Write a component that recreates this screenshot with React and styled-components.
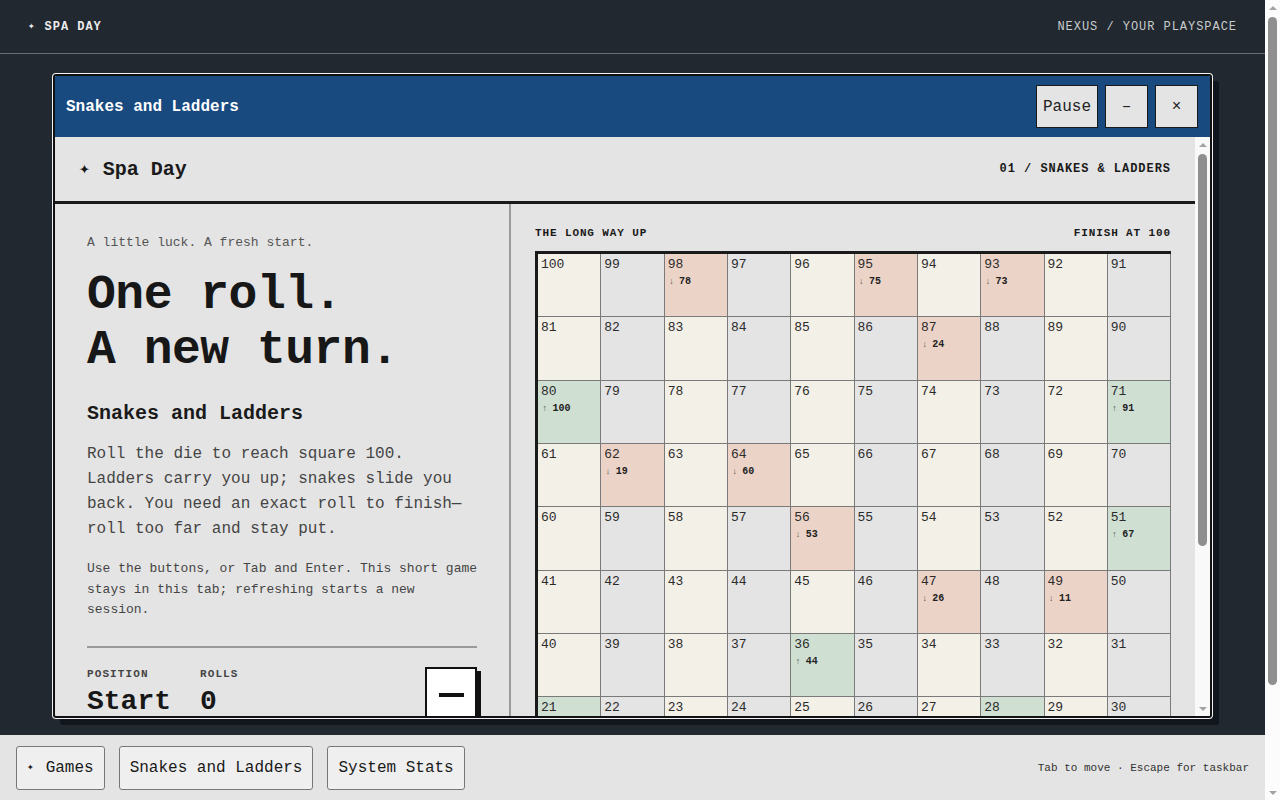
import React from 'react'
import styled, { createGlobalStyle } from 'styled-components'

const MONO = '"Liberation Mono", "DejaVu Sans Mono", monospace'

const GlobalStyle = createGlobalStyle`
    * { box-sizing: border-box; }
    body {
        margin: 0;
        background: #212830;
        font-family: ${MONO};
        color: #1a1a1a;
    }
`

const Page = styled.div`
    min-height: 918px;
    padding-right: 15px;
`
const TopBar = styled.header`
    height: 54px;
    display: flex;
    align-items: center;
    justify-content: space-between;
    padding: 0 28px;
    border-bottom: 1px solid #6a6e74;
    font-size: 12px;
    font-weight: 700;
    letter-spacing: 0.08em;
`
const Brand = styled.div`
    color: #ececec;
    display: flex;
    align-items: center;
    gap: 9px;
`
const Crumb = styled.div`
    color: #c9cbcd;
    font-weight: 400;
`
const Desktop = styled.main`
    padding: 20px 53px 0 53px;
`
const Window = styled.section`
    height: 644px;
    display: flex;
    flex-direction: column;
    border: 2px solid #111;
    border-radius: 3px;
    background: #e4e4e4;
    box-shadow: 0 0 0 1px #f2f2f2, 7px 7px 0 0 #11161c;
    overflow: hidden;
`
const TitleBar = styled.div`
    height: 61px;
    flex-shrink: 0;
    display: flex;
    align-items: center;
    justify-content: space-between;
    background: #184a7f;
    padding: 0 12px 0 11px;
`
const WindowTitle = styled.h2`
    margin: 0;
    color: #fff;
    font-size: 16px;
    font-weight: 700;
`
const TitleButtons = styled.div`
    display: flex;
    gap: 7px;
`
const TitleButton = styled.button`
    height: 43px;
    min-width: ${p => p.$wide ? '62px' : '43px'};
    padding: 0 6px;
    background: #e4e4e4;
    border: 1px solid #1a1a1a;
    font-family: ${MONO};
    font-size: 16px;
    color: #222;
    cursor: pointer;
`
const WindowBody = styled.div`
    flex: 1;
    min-height: 0;
    display: flex;
`
const BodyContent = styled.div`
    flex: 1;
    min-width: 0;
    overflow: hidden;
`

/* scroll rails drawn to match the browser's classic scrollbars */
const Rail = styled.div`
    width: 15px;
    flex-shrink: 0;
    background: #f9f9f9;
    display: flex;
    flex-direction: column;
    align-items: center;
`
const PageRail = styled(Rail)`
    position: fixed;
    top: 0;
    right: 0;
    bottom: 0;
    background: #fcfcfc;
`
const RailArrow = styled.span`
    height: 15px;
    flex-shrink: 0;
    display: flex;
    align-items: center;
    justify-content: center;
    &::before {
        content: '';
        border-left: 4px solid transparent;
        border-right: 4px solid transparent;
        ${p => p.$down ? 'border-top: 4px solid #a3a3a3;' : 'border-bottom: 4px solid #a3a3a3;'}
    }
`
const RailThumb = styled.span`
    width: 9px;
    height: ${p => p.$size}px;
    margin-top: 2px;
    border-radius: 5px;
    background: #8f8f8f;
`
const RailSpacer = styled.span`
    flex: 1;
`

const GameHeader = styled.div`
    height: 67px;
    display: flex;
    align-items: center;
    justify-content: space-between;
    padding: 0 24px;
    border-bottom: 3px solid #1a1a1a;
`
const GameName = styled.h1`
    margin: 0;
    font-size: 20px;
    font-weight: 700;
    display: flex;
    align-items: center;
    gap: 13px;
`
const Spark = styled.span`
    font-size: ${p => p.$size || '12px'};
    line-height: 1;
`
const GameIndex = styled.div`
    font-size: 12px;
    font-weight: 700;
    letter-spacing: 0.08em;
`
const GameLayout = styled.div`
    display: grid;
    grid-template-columns: 456px 1fr;
`
const InfoPanel = styled.div`
    padding: 31px 32px 24px 32px;
    border-right: 2px solid #9a9a9a;
`
const Tagline = styled.p`
    margin: 0 0 18px;
    font-size: 13px;
    color: #555;
`
const Headline = styled.h1`
    margin: 0 0 24px;
    font-size: 48px;
    line-height: 55px;
    letter-spacing: -0.01em;
    font-weight: 700;
    color: #171717;
`
const Subhead = styled.h3`
    margin: 0 0 17px;
    font-size: 20px;
    font-weight: 700;
`
const Lead = styled.p`
    margin: 0 0 17px;
    font-size: 16px;
    line-height: 25px;
    color: #444;
`
const Note = styled.p`
    margin: 0 -1px 0 0;
    font-size: 13px;
    line-height: 20.5px;
    color: #444;
`
const Divider = styled.hr`
    margin: 25px 0 20px;
    border: 0;
    border-top: 2px solid #9a9a9a;
`
const StatsRow = styled.div`
    display: flex;
    align-items: flex-start;
    gap: 29px;
`
const Stat = styled.div`
    display: flex;
    flex-direction: column;
    gap: 6px;
`
const StatLabel = styled.span`
    font-size: 11px;
    font-weight: 700;
    letter-spacing: 0.1em;
    color: #444;
`
const StatValue = styled.span`
    font-size: 28px;
    font-weight: 700;
    color: #171717;
`
const DieButton = styled.button`
    margin-left: auto;
    margin-top: -1px;
    width: 52px;
    height: 64px;
    background: #fff;
    border: 2px solid #111;
    box-shadow: 4px 4px 0 #111;
    display: flex;
    align-items: flex-start;
    justify-content: center;
    padding-top: 24px;
    cursor: pointer;
`
const DieFace = styled.span`
    display: block;
    width: 25px;
    height: 4px;
    background: #111;
`
const BoardPanel = styled.div`
    padding: 23px 24px 24px;
`
const BoardHead = styled.div`
    display: flex;
    justify-content: space-between;
    align-items: center;
    margin-bottom: 12px;
`
const BoardLabel = styled.span`
    font-size: 11px;
    font-weight: 700;
    letter-spacing: 0.08em;
`
const Board = styled.div`
    display: grid;
    grid-template-columns: repeat(10, 1fr);
    border-top: 3px solid #1a1a1a;
    border-left: 3px solid #1a1a1a;
`
const CELL_BG = {
  cream: '#f3f0e8',
  grey: '#e4e4e4',
  snake: '#ecd3c7',
  ladder: '#cfdfd2',
}
const Cell = styled.div`
    aspect-ratio: 1;
    padding: 3px 4px 3px 3px;
    border-right: 1px solid #7a7a7a;
    border-bottom: 1px solid #7a7a7a;
    background: ${p => CELL_BG[p.$tone]};
    display: flex;
    flex-direction: column;
    gap: 4px;
`
const CellNum = styled.span`
    font-size: 13px;
    color: #2b2b2b;
`
const Marker = styled.span`
    font-size: 10px;
    font-weight: 700;
    color: #222;
    display: flex;
    gap: 5px;
    align-items: baseline;
    padding-left: 1px;
`
const Arrow = styled.span`
    font-weight: 400;
    color: #555;
    font-size: 9px;
`
const Taskbar = styled.footer`
    position: fixed;
    left: 0;
    right: 15px;
    bottom: 0;
    height: 65px;
    background: #e4e4e4;
    display: flex;
    align-items: center;
    justify-content: space-between;
    padding: 0 16px;
`
const TaskButtons = styled.nav`
    display: flex;
    gap: 14px;
`
const TaskButton = styled.button`
    height: 44px;
    padding: 0 10px;
    background: #efefef;
    border: 1px solid #777;
    border-radius: 3px;
    font-family: ${MONO};
    font-size: 16px;
    color: #1a1a1a;
    display: flex;
    align-items: center;
    gap: 12px;
    cursor: pointer;
`
const Hint = styled.span`
    font-size: 11px;
    color: #333;
`

const SNAKES = { 16: 6, 47: 26, 49: 11, 56: 53, 62: 19, 64: 60, 87: 24, 93: 73, 95: 75, 98: 78 }
const LADDERS = { 1: 38, 4: 14, 9: 31, 21: 42, 28: 84, 36: 44, 51: 67, 71: 91, 80: 100 }

const buildCells = () => {
  const cells = []
  for (let row = 0; row < 10; row++) {
    const base = 100 - row * 10
    for (let col = 0; col < 10; col++) {
      const n = row % 2 === 0 ? base - col : base - 9 + col
      let tone = col % 2 === 0 ? 'cream' : 'grey'
      let jump = null
      if (SNAKES[n]) { tone = 'snake'; jump = { dir: '↓', to: SNAKES[n] } }
      if (LADDERS[n]) { tone = 'ladder'; jump = { dir: '↑', to: LADDERS[n] } }
      cells.push({ n, tone, jump })
    }
  }
  return cells
}

const cells = buildCells()

const ScrollRail = ({ as: Comp = Rail, thumb }) => (
  <Comp aria-hidden="true">
    <RailArrow />
    <RailThumb $size={thumb} />
    <RailSpacer />
    <RailArrow $down />
  </Comp>
)

export default function App() {
  return (
    <Page>
      <GlobalStyle />
      <TopBar>
        <Brand><Spark $size="11px">✦</Spark>SPA DAY</Brand>
        <Crumb>NEXUS / YOUR PLAYSPACE</Crumb>
      </TopBar>
      <Desktop>
        <Window>
          <TitleBar>
            <WindowTitle>Snakes and Ladders</WindowTitle>
            <TitleButtons>
              <TitleButton $wide>Pause</TitleButton>
              <TitleButton>–</TitleButton>
              <TitleButton>×</TitleButton>
            </TitleButtons>
          </TitleBar>
          <WindowBody>
            <BodyContent>
              <GameHeader>
                <GameName><Spark $size="18px">✦</Spark>Spa Day</GameName>
                <GameIndex>01 / SNAKES &amp; LADDERS</GameIndex>
              </GameHeader>
              <GameLayout>
                <InfoPanel>
                  <Tagline>A little luck. A fresh start.</Tagline>
                  <Headline>One roll.<br />A new turn.</Headline>
                  <Subhead>Snakes and Ladders</Subhead>
                  <Lead>Roll the die to reach square 100. Ladders carry you up; snakes slide you back. You need an exact roll to finish—roll too far and stay put.</Lead>
                  <Note>Use the buttons, or Tab and Enter. This short game stays in this tab; refreshing starts a new session.</Note>
                  <Divider />
                  <StatsRow>
                    <Stat>
                      <StatLabel>POSITION</StatLabel>
                      <StatValue>Start</StatValue>
                    </Stat>
                    <Stat>
                      <StatLabel>ROLLS</StatLabel>
                      <StatValue>0</StatValue>
                    </Stat>
                    <DieButton aria-label="Roll the die"><DieFace /></DieButton>
                  </StatsRow>
                </InfoPanel>
                <BoardPanel>
                  <BoardHead>
                    <BoardLabel>THE LONG WAY UP</BoardLabel>
                    <BoardLabel>FINISH AT 100</BoardLabel>
                  </BoardHead>
                  <Board>
                    {cells.map(c => (
                      <Cell key={c.n} $tone={c.tone}>
                        <CellNum>{c.n}</CellNum>
                        {c.jump && (
                          <Marker><Arrow>{c.jump.dir}</Arrow>{c.jump.to}</Marker>
                        )}
                      </Cell>
                    ))}
                  </Board>
                </BoardPanel>
              </GameLayout>
            </BodyContent>
            <ScrollRail thumb={392} />
          </WindowBody>
        </Window>
      </Desktop>
      <Taskbar>
        <TaskButtons>
          <TaskButton><Spark $size="11px">✦</Spark>Games</TaskButton>
          <TaskButton>Snakes and Ladders</TaskButton>
          <TaskButton>System Stats</TaskButton>
        </TaskButtons>
        <Hint>Tab to move · Escape for taskbar</Hint>
      </Taskbar>
      <ScrollRail as={PageRail} thumb={668} />
    </Page>
  )
}
